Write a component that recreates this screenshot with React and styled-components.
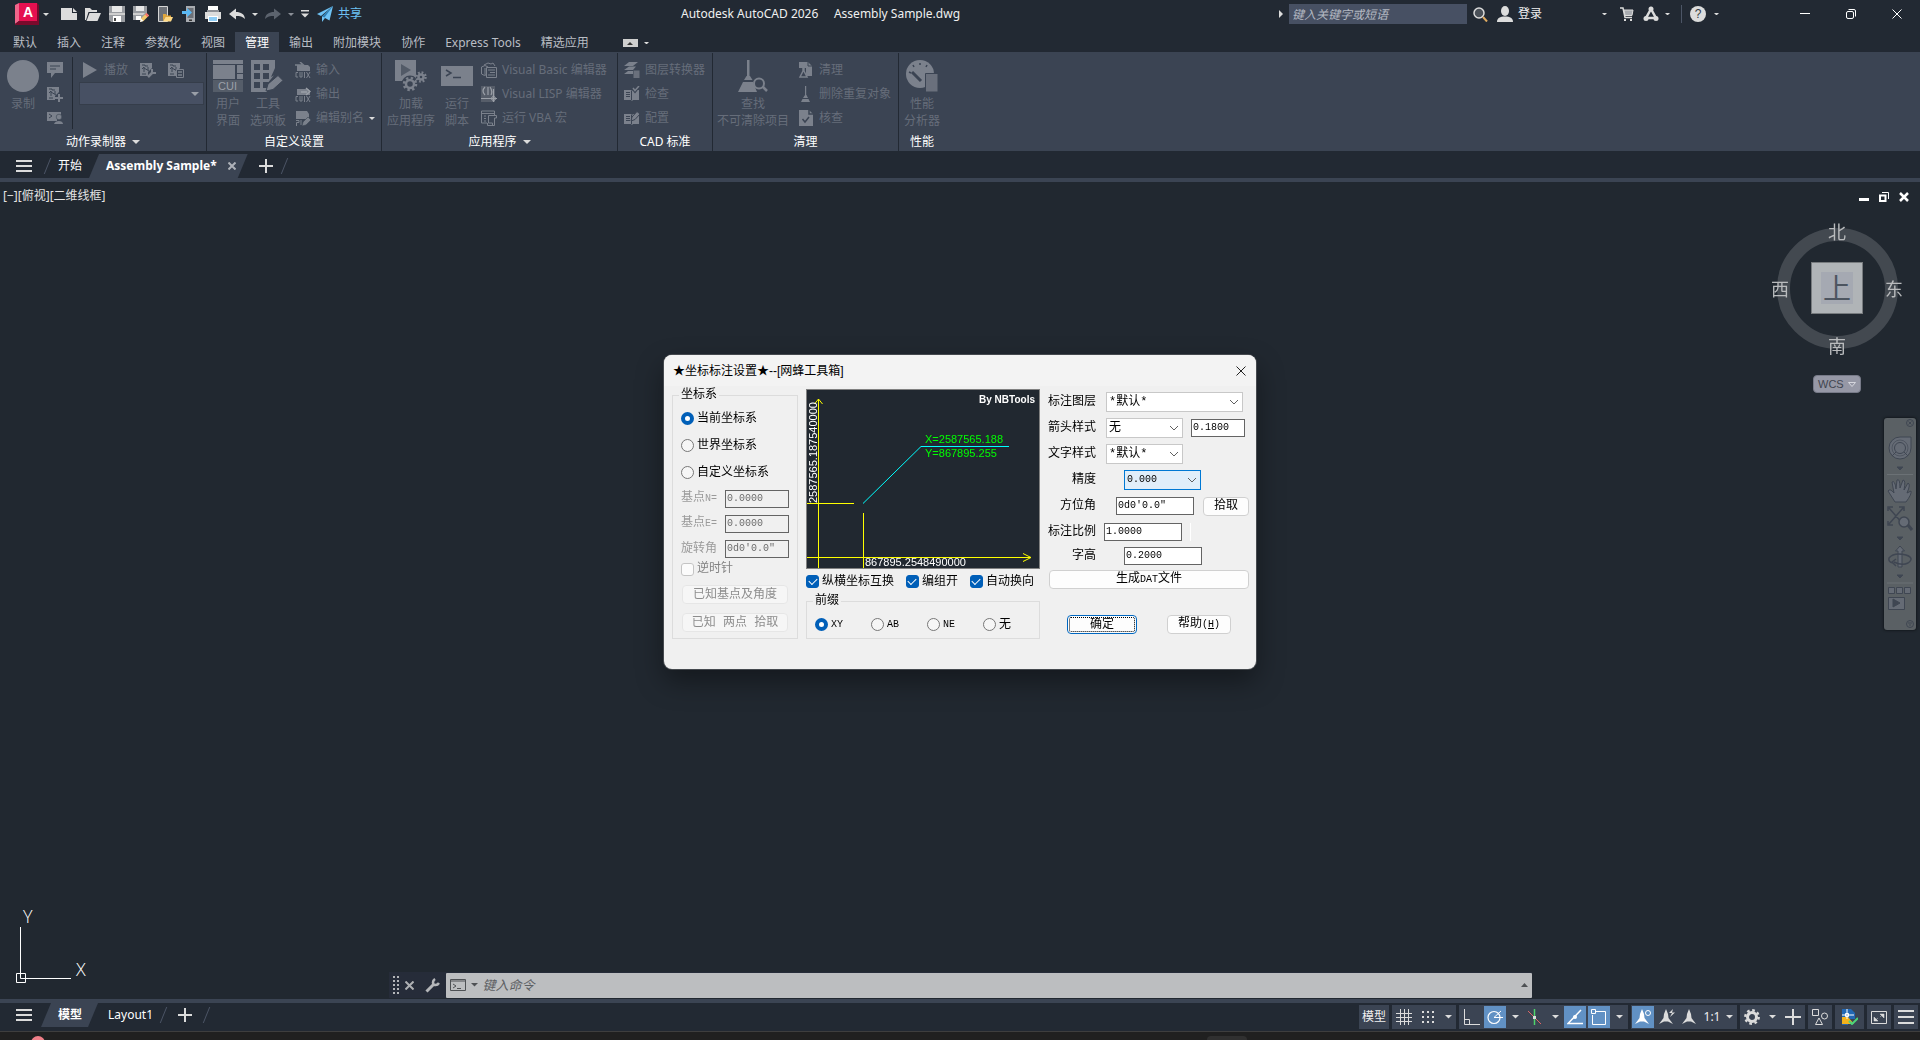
import React from "react";
import styled, { createGlobalStyle, css } from "styled-components";

const UI_FONT = `"Noto Sans", "Noto Sans CJK SC", sans-serif`;
const SONG_FONT = `"Liberation Mono", "Noto Sans CJK SC", monospace`;

const c = {
  bar: "#222933",
  panel: "#3b4453",
  canvas: "#212830",
  off: "#666d7a",
  offIcon: "#7b818c",
  icon: "#dcdcdc",
  blue: "#6191c4",
  sky: "#6ec2f5",
};

const GlobalStyle = createGlobalStyle`
  * { box-sizing: border-box; }
  body { margin: 0; background: ${c.canvas}; font: 12px/16px ${UI_FONT}; overflow: hidden; }
  button, input, select { font: inherit; color: inherit; margin: 0; padding: 0; border: 0; background: none; }
  svg { display: block; flex: none; }
`;

/* ---------- icons ---------- */

const Svg = ({ w = 16, h = 16, children, ...rest }) => (
  <svg width={w} height={h} viewBox={`0 0 ${w} ${h}`} fill="none" aria-hidden="true" {...rest}>
    {children}
  </svg>
);

const IconText = styled.text`
  font: ${(props) => props.$size}px "Liberation Sans", sans-serif;
  font-weight: ${(props) => (props.$bold ? 700 : 400)};
`;

const Caret = ({ color = c.icon, size = 8 }) => (
  <Svg w={size} h={size / 2}>
    <path d={`M0 0H${size}L${size / 2} ${size / 2}Z`} fill={color} />
  </Svg>
);

const LogoIcon = () => (
  <Svg w={24} h={22}>
    <path d="M0 2L4 0V18L0 21Z" fill="#f0668b" />
    <path d="M0 21L4 18H22V0L24 2V22H0Z" fill="#7a0a2c" />
    <path d="M4 0H22V18H4Z" fill="#e51050" />
    <IconText x="8" y="14" $size={14} $bold fill="#fff">A</IconText>
  </Svg>
);

const NewIcon = () => (
  <Svg><path d="M0 2H11V7H16V14H0Z" fill={c.icon} /><path d="M12 2L16 6H12Z" fill={c.icon} /></Svg>
);
const OpenIcon = () => (
  <Svg><path d="M0 14V2H5L7 4H12V6H3.500L1 14Z" fill={c.icon} /><path d="M4.500 7H16L12.500 15H1.500Z" fill={c.icon} /></Svg>
);
const SaveIcon = () => (
  <Svg>
    <path d="M0 0H16V16H2L0 14Z" fill="#9a9da2" />
    <path d="M3 0H13V6H3Z" fill="#e8e8e8" /><path d="M0 7H16V9H0Z" fill="#cfcfcf" />
    <path d="M4 10H12V16H4Z" fill="#fff" /><path d="M5 12H7V15H5Z" fill="#444" />
  </Svg>
);
const SaveAsIcon = () => (
  <Svg>
    <path d="M0 0H14V7L8 14H0Z" fill="#9a9da2" /><path d="M3 0H11V5H3Z" fill="#e8e8e8" />
    <path d="M0 7H12L10 9H0Z" fill="#cfcfcf" /><path d="M3 10H8V14H3Z" fill="#fff" />
    <path d="M7 16L8 12.500L13.500 7L16 9.500L10.500 15Z" fill="#f4c96b" />
    <path d="M12 8.500L13.500 7L16 9.500L14.500 11Z" fill="#f26d6d" /><path d="M7 16L8 12.500L10.500 15Z" fill="#fff" />
  </Svg>
);
const OpenWebIcon = () => (
  <Svg>
    <path d="M1.500 .5H10.500V15.500H1.500Z" fill="#6d7178" stroke="#d5d5d5" />
    <path d="M6 15V8H9L10 9.500H14V11H8.500Z" fill="#e0a63c" /><path d="M8.500 11H16L14 15.500H6Z" fill="#ffd985" />
  </Svg>
);
const SaveWebIcon = () => (
  <Svg>
    <path d="M5 0H14V16H5Z" fill="#a8abb0" /><path d="M6.500 2H12.500V12H6.500Z" fill="#6d7178" /><path d="M8 13.500H11V15H8Z" fill="#333" />
    <path d="M1 5H6V2L11 6.500L6 11V8H1Z" fill="#59b8f4" />
  </Svg>
);
const PrintIcon = () => (
  <Svg>
    <path d="M3 0H13V4H3Z" fill="#fff" /><path d="M0 6H16V13H13V10H3V13H0Z" fill="#dcdcdc" />
    <path d="M2 4H14V6H2Z" fill="#8d9096" /><path d="M3 10H13V16H3Z" fill="#fff" /><path d="M4 11H12V15H4Z" fill="#8fcdf6" />
  </Svg>
);
const UndoIcon = ({ color = c.icon, flip }) => (
  <Svg>
    <path
      d="M0 8L7 2.500V6C12 6 15.500 8 16 13C13.500 10.500 11 10 7 10V13.500Z"
      fill={color}
      transform={flip ? "translate(16 0) scale(-1 1)" : undefined}
    />
  </Svg>
);
const CustomIcon = () => (
  <Svg w={8} h={8}><path d="M0 0H8V1.500H0ZM0 3.500H8L4 7.500Z" fill={c.icon} /></Svg>
);
const SendIcon = () => (
  <Svg>
    <path d="M16 0L0 8L4 10Z" fill={c.sky} /><path d="M16 0L5 10.500V16L8 12L12.500 14.500Z" fill={c.sky} /><path d="M5 10.500L16 0L7.500 11.500" fill="#2f7fb5" />
  </Svg>
);
const SearchIcon = () => (
  <Svg>
    <circle cx="6" cy="7" r="5" stroke="#dcdcdc" strokeWidth="1.500" fill="#4a5058" />
    <path d="M10 11L14 15.500" stroke="#e0ab62" strokeWidth="2" />
  </Svg>
);
const UserIcon = () => (
  <Svg><ellipse cx="8" cy="5" rx="4" ry="5" fill={c.icon} /><path d="M0 16C0 12 3 10.500 8 10.500S16 12 16 16Z" fill={c.icon} /></Svg>
);
const CartIcon = () => (
  <Svg w={14} h={14}>
    <path d="M0 1H3L5 10.500H12" stroke={c.icon} strokeWidth="1.500" /><path d="M4 3H13L12 8.500H5Z" fill="#a9acb1" stroke={c.icon} />
    <path d="M4 12H6V14H4ZM10 12H12V14H10Z" fill={c.icon} />
  </Svg>
);
const StoreIcon = () => (
  <Svg>
    <path d="M8 3L13 12H3Z" stroke={c.icon} strokeWidth="2.500" />
    <circle cx="8" cy="3" r="2.500" fill={c.icon} /><circle cx="3" cy="12.500" r="2.500" fill={c.icon} /><circle cx="13" cy="12.500" r="2.500" fill={c.icon} />
  </Svg>
);
const HelpIcon = () => (
  <Svg>
    <circle cx="8" cy="8" r="8" fill={c.icon} />
    <IconText x="8" y="12" $size={12} textAnchor="middle" fill="#333a44">?</IconText>
  </Svg>
);

const MinIcon = () => <Svg w={10} h={10}><path d="M0 4.500H10" stroke="#fff" /></Svg>;
const RestoreIcon = () => (
  <Svg w={10} h={10}><rect x=".5" y="2.500" width="7" height="7" rx="1.500" stroke="#fff" /><path d="M2.500 .5H8Q9.500 .5 9.500 2V7.500" stroke="#fff" /></Svg>
);
const CloseIcon = ({ color = "#fff", size = 10, width = 1 }) => (
  <Svg w={size} h={size}><path d={`M.5 .5L${size - 0.5} ${size - 0.5}M${size - 0.5} .5L.5 ${size - 0.5}`} stroke={color} strokeWidth={width} /></Svg>
);
const MenuIcon = ({ color = c.icon }) => (
  <Svg w={16} h={12}><path d="M0 1H16M0 6H16M0 11H16" stroke={color} strokeWidth="2" /></Svg>
);
const PlusIcon = ({ size = 14 }) => (
  <Svg w={size} h={size}><path d={`M${size / 2} 0V${size}M0 ${size / 2}H${size}`} stroke={c.icon} strokeWidth="2" /></Svg>
);

const o = c.offIcon;
const p = c.panel;

const RecordIcon = () => <Svg w={32} h={32}><circle cx="16" cy="16" r="16" fill={o} /></Svg>;
const CommentIcon = () => (
  <Svg><path d="M0 0H16V11H8L4 16V11H0Z" fill={o} /><path d="M3 4H13M3 7H9" stroke={p} /></Svg>
);
const Macro = ({ children }) => (
  <Svg>
    <path d="M0 1H12V6L8 10V14H0Z" fill={o} />
    <path d="M2 3H5V4L8 4M2 7L4 5V10M4 6L9 9M2 12H6M8 5V8" stroke={p} />
    {children}
  </Svg>
);
const MacroAddIcon = () => <Macro><path d="M12 8V16M8 12H16" stroke={o} strokeWidth="2" /></Macro>;
const MacroEditIcon = () => <Macro><path d="M8 15L13 10" stroke={o} strokeWidth="2.500" /><path d="M12 7V11H16" stroke={o} strokeWidth="2" /></Macro>;
const MacroListIcon = () => (
  <Macro><path d="M8.500 7.500H15.500V15.500H8.500Z" stroke={o} fill={p} /><path d="M10 10H14M10 13H14" stroke={o} strokeWidth="1.500" /></Macro>
);
const UserInputIcon = () => (
  <Svg>
    <path d="M0 2H14V5L10 8V11H0Z" fill={o} /><path d="M2 4L5 6L2 8" stroke={p} />
    <circle cx="12" cy="7" r="2.800" fill={o} stroke={p} strokeWidth=".6" /><path d="M7 14C8 10 16 10 16 14Z" fill={o} />
  </Svg>
);
const PlayIcon = () => <Svg><path d="M0 0L14 8L0 16Z" fill={o} /></Svg>;

const CuiIcon = () => (
  <Svg w={30} h={32}>
    <path d="M0 0H30V4H0ZM0 5H22V19H0ZM24 5H30V13H24ZM24 14H30V19H24Z" fill={o} />
    <path d="M0 20H30V32H0Z" fill="#555d69" />
    <IconText x="5" y="30" $size={11} fill="#9ca1a9">CUI</IconText>
  </Svg>
);
const PaletteIcon = () => (
  <Svg w={34} h={32}>
    <path d="M0 0H24V14L16 24V32H0Z" fill={o} />
    <path d="M3 4H9V10H3ZM12 4H18V10H12ZM3 13H9V19H3ZM12 13H18V19H12ZM3 22H9V28H3ZM12 22H18V28H12Z" fill={p} />
    <path d="M20 17L24 8V15Z" fill={p} />
    <path d="M15 31L17 24L27 15.500L32 20.500L22 29.500Z" fill={o} stroke={p} />
  </Svg>
);
const CuixIcon = ({ out }) => (
  <Svg>
    <path d="M2 3H13L15 5V9H2Z" fill={o} />
    <path d={out ? "M6 6H12M11 2L15 5.500L11 9" : "M0 3H7M5 0L9 3.500L5 7"} stroke={out ? "#9ba0a8" : o} strokeWidth="1.500" />
    <path d="M3 10.500H1V15H3M5 10V15H7V10M9.500 10V16M11.500 10L15 16M15 10L11.500 16" stroke={o} />
  </Svg>
);
const PgpIcon = () => (
  <Svg>
    <path d="M1 1H12L14 4V9H1Z" fill={o} /><path d="M1 10.500H4V12.500H1.500V16M6 10V15" stroke={o} />
    <path d="M7 16L8 12L13 7L16 10L11 15Z" fill={o} stroke={p} strokeWidth=".6" />
  </Svg>
);
const gear = (cx, cy, r) => (
  <g stroke={o}>
    <circle cx={cx} cy={cy} r={r} strokeWidth="2.500" fill={p} />
    <circle cx={cx} cy={cy} r={r + 2} strokeWidth="2.500" strokeDasharray={`${((r + 2) * Math.PI) / 8} ${((r + 2) * Math.PI) / 8}`} />
  </g>
);
const LoadIcon = () => (
  <Svg w={32} h={32}>
    <path d="M0 0H21V21H0Z" fill={o} /><path d="M6 4L16 10L6 16Z" fill="#525a67" />
    <circle cx="15" cy="24" r="8.500" fill={p} />
    {gear(15, 24, 4)}
    {gear(26, 17, 2.5)}
  </Svg>
);
const ScriptIcon = () => (
  <Svg w={32} h={32}><path d="M0 6H32V26H0Z" fill={o} /><path d="M5 10L10 13L5 16M12 17.500H20" stroke={p} strokeWidth="1.500" /></Svg>
);
const VbIcon = () => (
  <Svg>
    <path d="M.5 5L4 3.500L7 5V12L3.500 13.500L.5 12ZM4 6V13M3 3L7 1L10 2L12 1L14 4" stroke={o} />
    <path d="M5.500 5.500H15.500V15.500H5.500Z" stroke={o} fill={p} /><path d="M7 8H14M9 10.500H14M7 13H14" stroke={o} />
  </Svg>
);
const LispIcon = () => (
  <Svg>
    <path d="M0 0H14V16H0Z" fill="#565d69" />
    <path d="M4 1Q0 5 4 9M7 1V9M9 1Q12 5 10 9M0 12.500H16M12.500 3V16" stroke="#9ba0a8" strokeWidth="1.200" />
    <circle cx="12.500" cy="12.500" r="2" stroke="#9ba0a8" />
  </Svg>
);
const VbaIcon = () => (
  <Svg>
    <path d="M.5 1H13.500V5M.5 1V13H6M.5 3.500H13" stroke={o} /><path d="M3 6H5M3 8.500H5M3 11H5" stroke={o} />
    <path d="M7.500 5.500H15.500V8H13.500V15.500H6.500V13M7.500 5.500V13H11.500V15.500" stroke={o} />
  </Svg>
);
const LayerIcon = () => (
  <Svg>
    <path d="M5 0H14L9 4H0ZM5 4.500H12L9 8H0ZM4 9H9V12H0Z" fill={o} /><path d="M9.500 8.500H15.500V16H9.500Z" fill="#6a707c" />
  </Svg>
);
const BookIcon = ({ edit }) => (
  <Svg>
    <path d="M0 4H7L8 5L9 4H15V14H9L8 15L7 14H0Z" fill={o} /><path d="M7.500 5V14M2 6.500H6M2 8.500H6M2 10.500H6" stroke={p} />
    {edit ? <path d="M7 11L8 7L13 1.500L16 4L11 9.500Z" fill={o} stroke={p} /> : <path d="M9 2.500L11 5L15 0" stroke={p} strokeWidth="3" />}
    {!edit && <path d="M9 2L11 4.500L15 0" stroke={o} strokeWidth="1.500" />}
  </Svg>
);
const PurgeFindIcon = () => (
  <Svg w={30} h={32}>
    <path d="M9 0H11.500V16H9ZM6 20L8.500 16H12L14.500 20ZM5 22H15L19 32H0Z" fill={o} />
    <circle cx="21" cy="23.500" r="5" stroke={o} strokeWidth="2" fill={p} /><path d="M25 27L29 31" stroke={o} strokeWidth="2.500" />
  </Svg>
);
const PurgeIcon = () => (
  <Svg><path d="M1 0H10L14 4V14H8V6H1Z" fill={o} /><path d="M10 0V4H14" stroke={p} /><path d="M5 5V9L2 15H9L6 9V5" stroke={o} strokeWidth="1.500" fill={p} /></Svg>
);
const BroomIcon = () => <Svg><path d="M7 0H8.200V9H7ZM7 9H8.500L10 12H5ZM4.500 13H10.500L12 16H3Z" fill={o} /></Svg>;
const AuditIcon = () => (
  <Svg><path d="M1 0H11L15 4V16H1Z" fill={o} /><path d="M11 0V4H15M4.500 9L7 12L11 7" stroke={p} strokeWidth="1.500" /></Svg>
);
const PerfIcon = () => (
  <Svg w={32} h={32}>
    <circle cx="14" cy="14" r="14" fill={o} /><path d="M5 13L3 12M8 7L7 5M14 5V3M20 7L21 5" stroke={p} strokeWidth="1.500" />
    <path d="M6 12L15 21" stroke={p} strokeWidth="3" /><path d="M19.500 13.500H32V32H19.500Z" fill="#6a707c" stroke={p} />
  </Svg>
);

/* ---------- title bar and tabs ---------- */

const Screen = styled.div`
  display: flex;
  flex-direction: column;
  height: 100vh;
  background: ${c.bar};
  color: #f0f0f0;
`;

const Row = styled.div`
  display: flex;
  align-items: center;
`;

const TitleBar = styled.header`
  display: flex;
  align-items: center;
  height: 28px;
  flex: none;
`;

const ToolButton = styled.button`
  display: flex;
  align-items: center;
  justify-content: center;
  width: ${(props) => props.$w || 24}px;
  height: 24px;
`;

const ShareButton = styled.button`
  display: flex;
  align-items: center;
  gap: 5px;
  margin-left: 4px;
  color: ${c.sky};
`;

const AppTitle = styled.h1`
  flex: 1;
  margin: 0;
  font-size: 12px;
  font-weight: 400;
  text-align: center;
  white-space: pre;
`;

const SearchBox = styled.input`
  width: 178px;
  height: 20px;
  padding: 0 3px;
  background: #475063;
  font-style: italic;
  &::placeholder { color: #b4b9c2; }
`;

const Login = styled.button`
  display: flex;
  align-items: center;
  gap: 5px;
  margin-left: 8px;
  width: 96px;
`;

const Rule = styled.span`
  width: 1px;
  height: 18px;
  margin: 0 8px 0 6px;
  background: #4c5566;
`;

const WindowButtons = styled.div`
  display: flex;
  margin-left: 63px;
`;

const Tabs = styled.nav`
  display: flex;
  align-items: stretch;
  height: 24px;
  padding: 4px 0 0 3px;
  flex: none;
`;

const Tab = styled.button`
  padding: 2px 10px 0;
  color: ${(props) => (props.$active ? "#fff" : "#b9bdc4")};
  background: ${(props) => (props.$active ? c.panel : "none")};
`;

const PanelToggle = styled.button`
  display: flex;
  align-items: center;
  gap: 6px;
  margin-left: 24px;
  padding-top: 2px;
`;

const ToggleBox = styled.span`
  display: grid;
  place-items: center;
  width: 15px;
  height: 8px;
  background: #cfcfcf;
`;

/* ---------- ribbon ---------- */

const Ribbon = styled.section`
  display: flex;
  height: 99px;
  flex: none;
  background: ${c.panel};
`;

const PanelBox = styled.div`
  display: flex;
  flex-direction: column;
  width: ${(props) => props.$w}px;
  margin-top: 1px;
  border-right: 1px solid ${(props) => (props.$last ? "transparent" : c.bar)};
`;

const PanelBody = styled.div`
  display: flex;
  flex: 1;
  color: ${c.off};
`;

const PanelTitle = styled.div`
  display: flex;
  align-items: center;
  justify-content: center;
  gap: 6px;
  height: 18px;
  color: #fff;
`;

const BigButton = styled.button`
  display: flex;
  flex-direction: column;
  align-items: center;
  gap: 3px;
  width: ${(props) => props.$w}px;
  padding-top: 7px;
  line-height: 17px;
  white-space: pre;
`;

const SmallColumn = styled.div`
  display: flex;
  flex-direction: column;
  padding: 5px 0 0 ${(props) => props.$left || 0}px;
`;

const SmallButton = styled.button`
  display: flex;
  align-items: center;
  gap: 5px;
  height: 24px;
  white-space: nowrap;
`;

const Divider = styled.span`
  width: 1px;
  height: 72px;
  margin: 4px 0 0 9px;
  background: ${c.bar};
`;

const PlayRow = styled.div`
  display: flex;
  gap: 12px;
  padding-left: 4px;
`;

const Combo = styled.div`
  display: grid;
  align-items: center;
  width: 125px;
  height: 23px;
  border: 1px solid #353d4a;
  background: #475063;
  svg { grid-area: 1 / 1; justify-self: end; margin-right: 4px; }
  select { grid-area: 1 / 1; width: 100%; height: 100%; appearance: none; opacity: 1; }
`;

const Panel = ({ title, w, menu, last, children }) => (
  <PanelBox $w={w} $last={last}>
    <PanelBody>{children}</PanelBody>
    <PanelTitle>{title}{menu && <Caret />}</PanelTitle>
  </PanelBox>
);

const Small = ({ icon, children, menu }) => (
  <SmallButton disabled>{icon}{children}{menu && <Caret size={6} />}</SmallButton>
);

/* ---------- file tabs ---------- */

const FileTabs = styled.nav`
  display: flex;
  align-items: stretch;
  height: ${(props) => props.$h}px;
  padding-top: ${(props) => props.$top || 0}px;
  flex: none;
`;

const HamburgerButton = styled.button`
  display: grid;
  place-items: center;
  width: 48px;
  margin-right: ${(props) => props.$overlap || 0}px;
`;

const Slash = styled.span`
  align-self: center;
  width: 1px;
  height: 16px;
  background: #4c5566;
  transform: skewX(-22deg);
`;

const FileTab = styled.button`
  padding: 0 10px;
  color: #fff;
`;

const ActiveTab = styled.div`
  display: flex;
  align-items: center;
  gap: 11px;
  margin-left: ${(props) => (props.$small ? 0 : -3)}px;
  padding: 0 ${(props) => (props.$small ? 16 : 12)}px 0 17px;
  background: ${c.panel};
  clip-path: polygon(10px 0, 100% 0, calc(100% - 10px) 100%, 0 100%);
  font-weight: 700;
  button { font-weight: 700; color: #fff; }
`;

const Strip = styled.div`
  height: 4px;
  flex: none;
  background: ${c.panel};
`;

/* ---------- drawing area ---------- */

const Canvas = styled.main`
  position: relative;
  display: flex;
  flex: 1;
  flex-direction: column;
  align-items: center;
  justify-content: flex-end;
  background: ${c.canvas};
`;

const ViewLabel = styled.div`
  position: absolute;
  left: 3px;
  top: 6px;
  color: #e3e3e3;
`;

const ViewButtons = styled.div`
  position: absolute;
  right: 11px;
  top: 10px;
  display: flex;
  gap: 10px;
`;

const Compass = styled.div`
  position: absolute;
  right: 15px;
  top: 38px;
  display: grid;
  grid-template: 22px 92px 22px / 22px 92px 22px;
  place-items: center;
  color: #b9bbbd;
  font: 18px/22px "Noto Sans CJK SC", sans-serif;
`;

const Ring = styled.div`
  grid-area: 1 / 1 / 4 / 4;
  width: 121px;
  height: 121px;
  border: 13px solid #434950;
  border-radius: 50%;
`;

const Dir = styled.span`
  grid-area: ${(props) => props.$at};
  z-index: 1;
`;

const CubeFace = styled.button`
  grid-area: 2 / 2;
  display: grid;
  place-items: center;
  width: 52px;
  height: 52px;
  border: 1px solid #777b7e;
  background: #b0b4b7;
`;

const CubeInner = styled.span`
  width: 32px;
  height: 32px;
  background: #a5a9b2;
  color: #4d5560;
  font: 28px/30px "Noto Sans CJK SC", sans-serif;
`;

const Wcs = styled.button`
  position: absolute;
  right: 59px;
  top: 193px;
  display: flex;
  align-items: center;
  justify-content: space-between;
  width: 48px;
  height: 18px;
  padding: 0 4px;
  border: 1px solid #777a88;
  border-radius: 4px;
  background: #9698a6;
  color: #41454f;
  font: 11px "Liberation Sans", sans-serif;
`;

const NavBar = styled.div`
  position: absolute;
  right: 4px;
  top: 236px;
  width: 32px;
  height: 212px;
  border-radius: 3px;
  background: #5a6064;
  box-shadow: 0 0 2px 1px #151a20;
`;

const Ucs = styled.div`
  position: absolute;
  left: 16px;
  bottom: 15px;
`;

const CommandLine = styled.div`
  display: flex;
  align-items: center;
  width: 60%;
  max-width: 1143px;
  height: 26px;
  margin-bottom: 1px;
  padding-left: 4px;
  background: #262c39;
`;

const CommandBox = styled.label`
  display: flex;
  flex: 1;
  align-items: center;
  gap: 5px;
  height: 25px;
  margin-left: 6px;
  padding: 0 4px;
  border-radius: 1px;
  background: #bcbec0;
`;

const CommandInput = styled.input`
  flex: 1;
  font-size: 13px;
  font-style: italic;
  outline: none;
  &::placeholder { color: #5d6063; }
`;

/* ---------- status bar ---------- */

const Bottom = styled.footer`
  display: flex;
  justify-content: space-between;
  height: 28px;
  flex: none;
`;

const StatusBar = styled.div`
  display: flex;
  align-items: center;
  gap: 3px;
  padding-right: 2px;
`;

const Group = styled.div`
  display: flex;
  align-items: center;
  height: 24px;
  padding: 0 ${(props) => props.$pad || 0}px;
  background: ${c.panel};
`;

const Toggle = styled.button`
  display: grid;
  place-items: center;
  width: ${(props) => props.$w || 22}px;
  height: 22px;
  ${(props) => props.$on && css`background: ${c.blue};`}
`;

const TaskBar = styled.div`
  display: grid;
  grid-template-columns: 1fr 1fr;
  height: 9px;
  flex: none;
  border-top: 1px solid #3e3e3e;
  background: #202020;
  padding-top: 4px;
  overflow: hidden;
`;

const TaskDot = styled.div`
  width: 14px;
  height: 14px;
  margin-left: 31px;
  border-radius: 50%;
  background: #ef7f88;
`;

const TaskWindow = styled.div`
  width: 40px;
  height: 14px;
  margin-left: 247px;
  border-radius: 4px;
  background: #303030;
`;

/* ---------- dialog ---------- */

const Overlay = styled.div`
  position: fixed;
  inset: 0;
  display: grid;
  place-items: center;
  padding-bottom: 16px;
`;

const Dialog = styled.section`
  width: 592px;
  height: 314px;
  overflow: hidden;
  border-radius: 8px;
  background: #f0f0f0;
  color: #000;
  box-shadow: 0 0 0 1px #45494e, 0 12px 28px rgba(0, 0, 0, 0.4);
  font: 12px/16px ${SONG_FONT};
`;

const DialogTitle = styled.div`
  display: flex;
  align-items: center;
  justify-content: space-between;
  height: 31px;
  padding: 0 10px 0 9px;
  background: #f3f3f3;
  font-family: "Liberation Sans", "Noto Sans CJK SC", sans-serif;
`;

const DialogBody = styled.form`
  display: grid;
  grid-template-columns: 126px 234px 201px;
  gap: 8px;
  padding: 3px 7px 0 8px;
`;

const FieldSet = styled.fieldset`
  margin: 0;
  padding: 0 8px ${(props) => props.$bottom || 0}px;
  border: 1px solid #dcdcdc;
  min-width: 0;
  legend { padding: 0 2px; margin-left: -2px; line-height: 12px; }
`;

const mark = css`
  appearance: none;
  width: 13px;
  height: 13px;
  flex: none;
`;

const RadioInput = styled.input`
  ${mark}
  border: 1px solid #767676;
  border-radius: 50%;
  background: #f6f6f6;
  &:checked { border: 4px solid #005fb8; background: #fff; }
`;

const CheckInput = styled.input`
  ${mark}
  display: grid;
  place-items: center;
  border: 1px solid #c4c4c4;
  border-radius: 3px;
  background: #fbfbfb;
  &:checked { border-color: #005fb8; background: #005fb8; }
  &:checked::after {
    content: "";
    width: 7px;
    height: 4px;
    border: solid #fff;
    border-width: 0 0 1px 1px;
    transform: translateY(-1px) rotate(-45deg);
  }
`;

const Choice = styled.label`
  display: flex;
  align-items: center;
  gap: 3px;
  height: ${(props) => props.$h || 27}px;
  width: ${(props) => (props.$w ? `${props.$w}px` : "auto")};
  color: ${(props) => (props.$off ? "#838383" : "inherit")};
  white-space: nowrap;
`;

const RadioStack = styled.div`
  padding-top: 4px;
`;

const PrefixRow = styled.div`
  display: flex;
  padding-top: 4px;
`;

const Field = styled.div`
  display: flex;
  align-items: center;
  justify-content: space-between;
  height: 25px;
  color: #9a9a9a;
  white-space: nowrap;
`;

const Latin = styled.span`
  font-size: 10px;
`;

const TextBox = styled.input`
  width: ${(props) => props.$w}px;
  height: 18px;
  padding: 0 0 1px 1px;
  border: 1px solid #646464;
  background: ${(props) => (props.disabled ? "#f0f0f0" : "#fff")};
  color: ${(props) => (props.disabled ? "#6d6d6d" : "#000")};
  font-size: 10px;
`;

const PushButton = styled.button`
  width: ${(props) => props.$w}px;
  height: 19px;
  border: 1px solid ${(props) => (props.$primary ? "#0067c0" : "#d0d0d0")};
  border-radius: 4px;
  background: #fdfdfd;
  line-height: 16px;
  &:disabled { border-color: #e6e6e6; background: #f6f6f6; color: #8d8d8d; }
  ${(props) => props.$primary && css`outline: 1px dotted #000; outline-offset: -3px;`}
`;

const ButtonStack = styled.div`
  display: grid;
  gap: 9px;
  justify-items: center;
  padding-top: 8px;
`;

const Preview = styled.svg`
  border: 1px solid #808080;
  background: ${c.canvas};
`;

const PreviewText = styled.text`
  font: 11px "Liberation Sans", sans-serif;
`;

const PreviewBrand = styled.text`
  font: 700 10px "Liberation Sans", sans-serif;
`;

const Checks = styled.div`
  display: flex;
  justify-content: space-between;
  height: 24px;
  margin-bottom: 2px;
  padding-right: 6px;
`;

const Line = styled.div`
  display: flex;
  align-items: center;
  height: ${(props) => props.$h || 26}px;
  label { width: 48px; margin-right: ${(props) => props.$gap}px; text-align: right; white-space: nowrap; }
`;

const SelectWrap = styled.div`
  display: grid;
  align-items: center;
  width: ${(props) => props.$w}px;
  height: 20px;
  border: 1px solid ${(props) => (props.$hot ? "#0078d4" : "#c8c8c8")};
  background: ${(props) => (props.$hot ? "#e0eefa" : "#fff")};
  svg { grid-area: 1 / 1; justify-self: end; margin-right: 3px; pointer-events: none; }
  select { grid-area: 1 / 1; width: 100%; height: 18px; padding-left: 2px; appearance: none; font-size: ${(props) => (props.$hot ? 10 : 12)}px; }
`;

const Spacer = styled.span`
  width: ${(props) => props.$w}px;
`;

const Notch = styled.span`
  width: 1px;
  height: 18px;
  margin-left: 8px;
  background: #fff;
`;

const Generate = styled.div`
  padding: 3px 0 0 1px;
`;

const Actions = styled.div`
  display: flex;
  gap: 30px;
  padding: 26px 0 0 19px;
`;

const Select = ({ id, w, value, hot }) => (
  <SelectWrap $w={w} $hot={hot}>
    <select id={id} defaultValue={value}><option>{value}</option></select>
    <Svg w={10} h={6}><path d="M1 1L5 5L9 1" stroke="#606060" /></Svg>
  </SelectWrap>
);

const TABS = ["默认", "插入", "注释", "参数化", "视图", "管理", "输出", "附加模块", "协作", "Express Tools", "精选应用"];

const CoordDialog = () => (
  <Overlay>
    <Dialog role="dialog" aria-label="坐标标注设置">
      <DialogTitle>
        <span>★坐标标注设置★--[网蜂工具箱]</span>
        <button aria-label="关闭"><CloseIcon color="#222" /></button>
      </DialogTitle>
      <DialogBody onSubmit={(e) => e.preventDefault()}>
        <FieldSet $bottom={5}>
          <legend>坐标系</legend>
          <RadioStack>
            {["当前坐标系", "世界坐标系", "自定义坐标系"].map((name, i) => (
              <Choice key={name}><RadioInput type="radio" name="ucs" defaultChecked={i === 0} />{name}</Choice>
            ))}
          </RadioStack>
          <Field><label htmlFor="bn">基点<Latin>N=</Latin></label><TextBox id="bn" $w={64} defaultValue="0.0000" disabled /></Field>
          <Field><label htmlFor="be">基点<Latin>E=</Latin></label><TextBox id="be" $w={64} defaultValue="0.0000" disabled /></Field>
          <Field><label htmlFor="rot">旋转角</label><TextBox id="rot" $w={64} defaultValue={`0d0'0.0"`} disabled /></Field>
          <Choice $h={16} $off><CheckInput type="checkbox" disabled />逆时针</Choice>
          <ButtonStack>
            <PushButton type="button" $w={106} disabled>已知基点及角度</PushButton>
            <PushButton type="button" $w={106} disabled>已知 两点 拾取</PushButton>
          </ButtonStack>
        </FieldSet>

        <div>
          <Preview width="234" height="180" viewBox="1 1 232 178">
            <g stroke="#ffff00" fill="none">
              <path d="M12.500 10V179M8.500 15L12.500 10L16.500 15" />
              <path d="M1 168.500H225M217 164.500L225 168.500L217 172.500" />
              <path d="M1 114.500H48M57.500 124V179" />
            </g>
            <path d="M57 114.500L115 57.500H203" stroke="#00ffff" fill="none" />
            <PreviewText x="119" y="54" fill="#00ff00">X=2587565.188</PreviewText>
            <PreviewText x="119" y="68" fill="#00ff00">Y=867895.255</PreviewText>
            <PreviewText x="59" y="177" fill="#fff">867895.2548490000</PreviewText>
            <PreviewText x="0" y="0" fill="#fff" transform="translate(11 114) rotate(-90)">2587565.187540000</PreviewText>
            <PreviewBrand x="229" y="14" textAnchor="end" fill="#fff">By NBTools</PreviewBrand>
          </Preview>
          <Checks>
            {["纵横坐标互换", "编组开", "自动换向"].map((name) => (
              <Choice key={name} $h={25}><CheckInput type="checkbox" defaultChecked />{name}</Choice>
            ))}
          </Checks>
          <FieldSet>
            <legend>前缀</legend>
            <PrefixRow>
              {["XY", "AB", "NE"].map((name, i) => (
                <Choice key={name} $w={56}><RadioInput type="radio" name="prefix" defaultChecked={i === 0} /><Latin>{name}</Latin></Choice>
              ))}
              <Choice><RadioInput type="radio" name="prefix" />无</Choice>
            </PrefixRow>
          </FieldSet>
        </div>

        <div>
          <Line $gap={10}><label htmlFor="layer">标注图层</label><Select id="layer" w={137} value="*默认*" /></Line>
          <Line $gap={10}>
            <label htmlFor="arrow">箭头样式</label><Select id="arrow" w={77} value="无" />
            <Spacer $w={8} /><TextBox $w={54} defaultValue="0.1800" aria-label="箭头大小" />
          </Line>
          <Line $gap={10}><label htmlFor="style">文字样式</label><Select id="style" w={77} value="*默认*" /></Line>
          <Line $gap={28}><label htmlFor="prec">精度</label><Select id="prec" w={77} value="0.000" hot /></Line>
          <Line $gap={20}>
            <label htmlFor="azi">方位角</label><TextBox id="azi" $w={78} defaultValue={`0d0'0.0"`} />
            <Spacer $w={9} /><PushButton type="button" $w={46}>拾取</PushButton>
          </Line>
          <Line $gap={8}><label htmlFor="scale">标注比例</label><TextBox id="scale" $w={78} defaultValue="1.0000" /><Notch /></Line>
          <Line $gap={28} $h={22}><label htmlFor="high">字高</label><TextBox id="high" $w={78} defaultValue="0.2000" /></Line>
          <Generate><PushButton type="button" $w={200}>生成<Latin>DAT</Latin>文件</PushButton></Generate>
          <Actions>
            <PushButton type="submit" $w={70} $primary>确定</PushButton>
            <PushButton type="button" $w={64}>帮助<Latin>(<u>H</u>)</Latin></PushButton>
          </Actions>
        </div>
      </DialogBody>
    </Dialog>
  </Overlay>
);

const Drop = ({ w = 16 }) => <Toggle $w={w} aria-label="更多"><Caret size={7} /></Toggle>;

const Person = ({ children, color = c.icon }) => (
  <Svg>
    <path d="M7 0L9 5L9.500 9L14 15L9 12.500H5L0 15L4.500 9L5 5Z" fill={color} />
    {children}
  </Svg>
);

const Status = () => (
  <StatusBar>
    <Group><Toggle $w={30}>模型</Toggle></Group>
    <Group>
      <Toggle $w={24}><Svg><path d="M4.500 0V16M8.500 0V16M12.500 0V16M0 4.500H16M0 8.500H16M0 12.500H16" stroke={c.icon} /></Svg></Toggle>
      <Toggle $w={24}><Svg w={12} h={12}><path d="M0 1H12M0 6H12M0 11H12" stroke={c.icon} strokeWidth="2" strokeDasharray="2 3" /></Svg></Toggle>
      <Drop />
    </Group>
    <Group>
      <Toggle $w={25}><Svg><path d="M.5 0V15.500H16M.5 10.500H5.500V15.500" stroke={c.icon} /></Svg></Toggle>
      <Toggle $on><Svg><circle cx="7" cy="8.500" r="6" stroke="#fff" strokeWidth="1.200" /><path d="M7 8.500H16M7 8.500L14 2" stroke="#fff" /></Svg></Toggle>
      <Drop w={18} />
      <Toggle><Svg><path d="M1 2L14 15" stroke="#e06666" /><path d="M7.500 0V16" stroke="#4fd36b" strokeWidth="1.500" /><path d="M6 7H9V10H6Z" fill={c.icon} /></Svg></Toggle>
      <Drop w={18} />
      <Toggle $on><Svg><path d="M14 1L1 14.500H16" stroke="#fff" strokeWidth="1.500" /><circle cx="8" cy="8" r="2" fill="#fff" /></Svg></Toggle>
      <Spacer $w={2} />
      <Toggle $on><Svg><path d="M5 2.500H14.500V15.500H1.500V6" stroke="#fff" /><path d="M.5 .5H4.500V4.500H.5Z" stroke="#fff" /></Svg></Toggle>
      <Drop w={18} />
    </Group>
    <Group $pad={1}>
      <Toggle $on><Person color="#fff"><circle cx="13" cy="4" r="2.500" stroke="#fff" /></Person></Toggle>
      <Spacer $w={2} />
      <Toggle><Person><path d="M14 0L10 4H13L11 8L16 3.500H13Z" fill={c.icon} /></Person></Toggle>
      <Toggle $w={24}><Person /></Toggle>
      <Toggle $w={20}>1:1</Toggle>
      <Drop w={14} />
    </Group>
    <Group>
      <Toggle $w={24}>
        <Svg>
          <circle cx="8" cy="8" r="4.500" stroke={c.icon} strokeWidth="3" />
          <circle cx="8" cy="8" r="6.700" stroke={c.icon} strokeWidth="2.400" strokeDasharray="2.630 2.630" />
        </Svg>
      </Toggle>
      <Drop w={17} />
      <Toggle $w={24}><PlusIcon size={16} /></Toggle>
    </Group>
    <Group><Toggle $w={24}><Svg><path d="M.5 .5H6.500V6.500H.5ZM7 9L10.500 15.500H3.500Z" stroke={c.icon} /><circle cx="12.500" cy="7" r="3" stroke={c.icon} /></Svg></Toggle></Group>
    <Group>
      <Toggle $w={29}>
        <Svg>
          <path d="M0 0H9L13 4V10H6V16H0Z" fill="#2268b4" /><path d="M0 8H6L12 15H0Z" fill="#f3b21c" />
          <path d="M0 6H12M5 0V10" stroke="#fff" /><path d="M3.500 4.500H6.500V7.500H3.500Z" stroke="#fff" /><path d="M7 12L10 15L16 9" stroke="#4bd47a" strokeWidth="2" />
        </Svg>
      </Toggle>
    </Group>
    <Group>
      <Toggle $w={24}>
        <Svg><path d="M.5 2.500H15.500V14.500H.5Z" stroke={c.icon} /><path d="M9 5H13V9ZM3 8V12H7ZM9 8L12 5.500M4 11.500L7 9" fill={c.icon} stroke={c.icon} strokeWidth=".5" /></Svg>
      </Toggle>
    </Group>
    <Group><Toggle $w={24}><Svg w={16} h={14}><path d="M0 1H16M0 7H16M0 13H16" stroke={c.icon} strokeWidth="2" /></Svg></Toggle></Group>
  </StatusBar>
);

const dark = "#3f4652";

const Navigation = () => (
  <NavBar>
    <Svg w={32} h={212} stroke={dark}>
      <circle cx="26" cy="5" r="3.500" /><path d="M24.500 3.500L27.500 6.500M27.500 3.500L24.500 6.500" />
      <path d="M16 19H27V30A11 11 0 1 1 16 19Z" fill="#656b75" /><circle cx="16" cy="30" r="5.500" /><circle cx="16" cy="30" r="8" strokeWidth=".6" /><path d="M12 34L8 38M20 34L24 38" />
      <path d="M13 49H19L16 52Z" fill={dark} />
      <path d="M3 56.500H29M3 165H29" stroke="#6b7175" />
      <path d="M11 84L4 73Q6 70 10 75L8 64Q11 62 12 71L13 62Q16 60 16 70L19 62Q22 62 20 72L24 65Q27 66 23 75L27 73Q28 76 22 84Z" fill="#656b75" />
      <path d="M5 90L19 106M19 90L5 106M4 93V89H9M15 89H20V93M4 103V107H9" strokeWidth="1.500" />
      <circle cx="20" cy="104" r="5" fill="#656b75" strokeWidth="1.500" /><path d="M24 107L28 112" strokeWidth="3" />
      <path d="M13 119H19L16 122ZM13 157H19L16 160Z" fill={dark} />
      <path d="M14 149V133H11.500L16 128L20.500 133H18V149Z" fill="#656b75" />
      <path d="M9 145Q4 144 5 140Q10 134 22 137Q31 140 24 145Q18 148 10 144M12 141L8 144L12 148" strokeWidth="1.500" />
      <path d="M4.500 169.500H10.500V175.500H4.500ZM12.500 169.500H18.500V175.500H12.500ZM20.500 169.500H26.500V175.500H20.500ZM4.500 179.500H20.500V191.500H4.500Z" fill="#656b75" />
      <path d="M9 181V189L16 185Z" fill={dark} />
      <circle cx="26" cy="206" r="3.500" /><path d="M24 205H28M25 207H27" />
    </Svg>
  </NavBar>
);

const UcsText = styled.text`
  font: 18px "Open Sans", sans-serif;
  font-weight: 300;
`;

export default function App() {
  return (
    <Screen>
      <GlobalStyle />
      <TitleBar>
        <Row>
          <Spacer $w={15} />
          <LogoIcon />
          <ToolButton $w={14} aria-label="菜单"><Caret size={6} /></ToolButton>
          <Spacer $w={4} />
          <ToolButton aria-label="新建"><NewIcon /></ToolButton>
          <ToolButton aria-label="打开"><OpenIcon /></ToolButton>
          <ToolButton aria-label="保存"><SaveIcon /></ToolButton>
          <ToolButton aria-label="另存为"><SaveAsIcon /></ToolButton>
          <ToolButton aria-label="从 Web 打开"><OpenWebIcon /></ToolButton>
          <ToolButton aria-label="保存到 Web"><SaveWebIcon /></ToolButton>
          <ToolButton aria-label="打印"><PrintIcon /></ToolButton>
          <ToolButton aria-label="放弃"><UndoIcon /></ToolButton>
          <ToolButton $w={12} aria-label="更多"><Caret size={6} /></ToolButton>
          <ToolButton aria-label="重做"><UndoIcon color="#5c636e" flip /></ToolButton>
          <ToolButton $w={12} aria-label="更多"><Caret size={6} color="#8b9098" /></ToolButton>
          <ToolButton $w={16} aria-label="自定义"><CustomIcon /></ToolButton>
          <ShareButton><SendIcon />共享</ShareButton>
        </Row>
        <AppTitle>{"Autodesk AutoCAD 2026     Assembly Sample.dwg"}</AppTitle>
        <Row>
          <Svg w={4} h={8}><path d="M0 0L4 4L0 8Z" fill={c.icon} /></Svg>
          <Spacer $w={6} />
          <SearchBox placeholder="键入关键字或短语" aria-label="搜索" />
          <Spacer $w={6} />
          <SearchIcon />
          <Login><UserIcon />登录</Login>
          <Spacer $w={9} />
          <Caret size={5} />
          <Spacer $w={13} />
          <CartIcon />
          <Spacer $w={9} />
          <StoreIcon />
          <Spacer $w={6} />
          <Caret size={5} />
          <Spacer $w={5} />
          <Rule />
          <HelpIcon />
          <Spacer $w={8} />
          <Caret size={5} />
          <WindowButtons>
            <ToolButton $w={46} aria-label="最小化"><MinIcon /></ToolButton>
            <ToolButton $w={46} aria-label="还原"><RestoreIcon /></ToolButton>
            <ToolButton $w={46} aria-label="关闭"><CloseIcon /></ToolButton>
          </WindowButtons>
        </Row>
      </TitleBar>

      <Tabs>
        {TABS.map((name) => <Tab key={name} $active={name === "管理"}>{name}</Tab>)}
        <PanelToggle aria-label="最小化面板">
          <ToggleBox><Svg w={6} h={3}><path d="M0 3L3 0L6 3Z" fill="#333" /></Svg></ToggleBox>
          <Caret size={5} />
        </PanelToggle>
      </Tabs>

      <Ribbon>
        <Panel title="动作录制器" w={207} menu>
          <BigButton $w={46} disabled><RecordIcon />录制</BigButton>
          <SmallColumn $left={1}>
            <Small icon={<CommentIcon />} />
            <Small icon={<MacroAddIcon />} />
            <Small icon={<UserInputIcon />} />
          </SmallColumn>
          <Divider />
          <SmallColumn $left={6}>
            <PlayRow>
              <Small icon={<PlayIcon />}>播放</Small>
              <Small icon={<MacroEditIcon />} />
              <Small icon={<MacroListIcon />} />
            </PlayRow>
            <Combo><select disabled aria-label="可用宏" /><Caret color="#9a9fa8" /></Combo>
          </SmallColumn>
        </Panel>
        <Panel title="自定义设置" w={175}>
          <Spacer $w={1} />
          <BigButton $w={40} disabled><CuiIcon />{"用户\n界面"}</BigButton>
          <BigButton $w={40} disabled><PaletteIcon />{"工具\n选项板"}</BigButton>
          <SmallColumn $left={7}>
            <Small icon={<CuixIcon />}>输入</Small>
            <Small icon={<CuixIcon out />}>输出</Small>
            <Small icon={<PgpIcon />} menu>编辑别名</Small>
          </SmallColumn>
        </Panel>
        <Panel title="应用程序" w={236} menu>
          <BigButton $w={58} disabled><LoadIcon />{"加载\n应用程序"}</BigButton>
          <BigButton $w={34} disabled><ScriptIcon />{"运行\n脚本"}</BigButton>
          <SmallColumn $left={7}>
            <Small icon={<VbIcon />}>Visual Basic 编辑器</Small>
            <Small icon={<LispIcon />}>Visual LISP 编辑器</Small>
            <Small icon={<VbaIcon />}>运行 VBA 宏</Small>
          </SmallColumn>
        </Panel>
        <Panel title="CAD 标准" w={95}>
          <SmallColumn $left={6}>
            <Small icon={<LayerIcon />}>图层转换器</Small>
            <Small icon={<BookIcon />}>检查</Small>
            <Small icon={<BookIcon edit />}>配置</Small>
          </SmallColumn>
        </Panel>
        <Panel title="清理" w={186}>
          <BigButton $w={80} disabled><PurgeFindIcon />{"查找\n不可清除项目"}</BigButton>
          <SmallColumn $left={5}>
            <Small icon={<PurgeIcon />}>清理</Small>
            <Small icon={<BroomIcon />}>删除重复对象</Small>
            <Small icon={<AuditIcon />}>核查</Small>
          </SmallColumn>
        </Panel>
        <Panel title="性能" w={47} last>
          <BigButton $w={46} disabled><PerfIcon />{"性能\n分析器"}</BigButton>
        </Panel>
      </Ribbon>

      <FileTabs $h={27} $top={3}>
        <HamburgerButton $overlap={-1} aria-label="文件"><MenuIcon /></HamburgerButton>
        <Slash />
        <FileTab>开始</FileTab>
        <ActiveTab><button>Assembly Sample*</button><CloseIcon size={8} width={2} color="#aeb2b9" /></ActiveTab>
        <ToolButton $w={36} aria-label="新图形"><PlusIcon /></ToolButton>
        <Slash />
      </FileTabs>
      <Strip />

      <Canvas>
        <ViewLabel>[−][俯视][二维线框]</ViewLabel>
        <ViewButtons>
          <Svg w={10} h={10}><path d="M0 6H10V9H0Z" fill="#fff" /></Svg>
          <Svg w={10} h={10}><path d="M1 3.500H6.500V9H1Z" stroke="#fff" strokeWidth="2" /><path d="M3 .5H9.500V7" stroke="#fff" /></Svg>
          <Svg w={10} h={10}><path d="M1 1L9 9M9 1L1 9" stroke="#fff" strokeWidth="2.500" /></Svg>
        </ViewButtons>
        <Compass>
          <Ring />
          <Dir $at="1 / 2">北</Dir>
          <Dir $at="2 / 1">西</Dir>
          <Dir $at="2 / 3">东</Dir>
          <Dir $at="3 / 2">南</Dir>
          <CubeFace><CubeInner>上</CubeInner></CubeFace>
        </Compass>
        <Wcs>WCS<Svg w={8} h={5}><path d="M.5 .5H7.500L4 4.500Z" stroke="#d5d6dd" /></Svg></Wcs>
        <Navigation />
        <Ucs>
          <Svg w={80} h={84} stroke="#fff">
            <path d="M4.500 27V74M.5 73.500H9.500V82.500H.5ZM4.500 78.500H55M4.500 74V78.500" />
            <UcsText x="7" y="23" fill="#fff" stroke="none">Y</UcsText>
            <UcsText x="60" y="76" fill="#fff" stroke="none">X</UcsText>
          </Svg>
        </Ucs>
        <CommandLine>
          <Svg w={6} h={18}><path d="M1 0V18M5 0V18" stroke="#b4b6b9" strokeWidth="2" strokeDasharray="2 2" /></Svg>
          <Spacer $w={6} />
          <CloseIcon size={9} width={2} color="#aeb0b3" />
          <Spacer $w={11} />
          <Svg w={15} h={15}><path d="M1.500 13.500L9 6" stroke="#b4b6b9" strokeWidth="3" /><path d="M10 1Q7 3 8.500 6.500Q12 8 14 5" stroke="#b4b6b9" strokeWidth="2.500" /></Svg>
          <CommandBox>
            <Svg w={16} h={12}><path d="M.5 .5H15.500V11.500H.5ZM.5 2H15.500M3 5L6 7L3 9M7 9.500H11" stroke="#4e5154" /></Svg>
            <Caret size={7} color="#4e5154" />
            <CommandInput placeholder="键入命令" aria-label="命令" />
            <Svg w={7} h={4}><path d="M0 4L3.500 0L7 4Z" fill="#4e5154" /></Svg>
          </CommandBox>
        </CommandLine>
      </Canvas>

      <Strip />
      <Bottom>
        <FileTabs $h={24}>
          <HamburgerButton $overlap={-7} aria-label="布局"><MenuIcon /></HamburgerButton>
          <ActiveTab $small><button>模型</button></ActiveTab>
          <FileTab>Layout1</FileTab>
          <Slash />
          <ToolButton $w={42} aria-label="新布局"><PlusIcon /></ToolButton>
          <Slash />
        </FileTabs>
        <Status />
      </Bottom>
      <TaskBar><TaskDot /><TaskWindow /></TaskBar>
      <CoordDialog />
    </Screen>
  );
}
